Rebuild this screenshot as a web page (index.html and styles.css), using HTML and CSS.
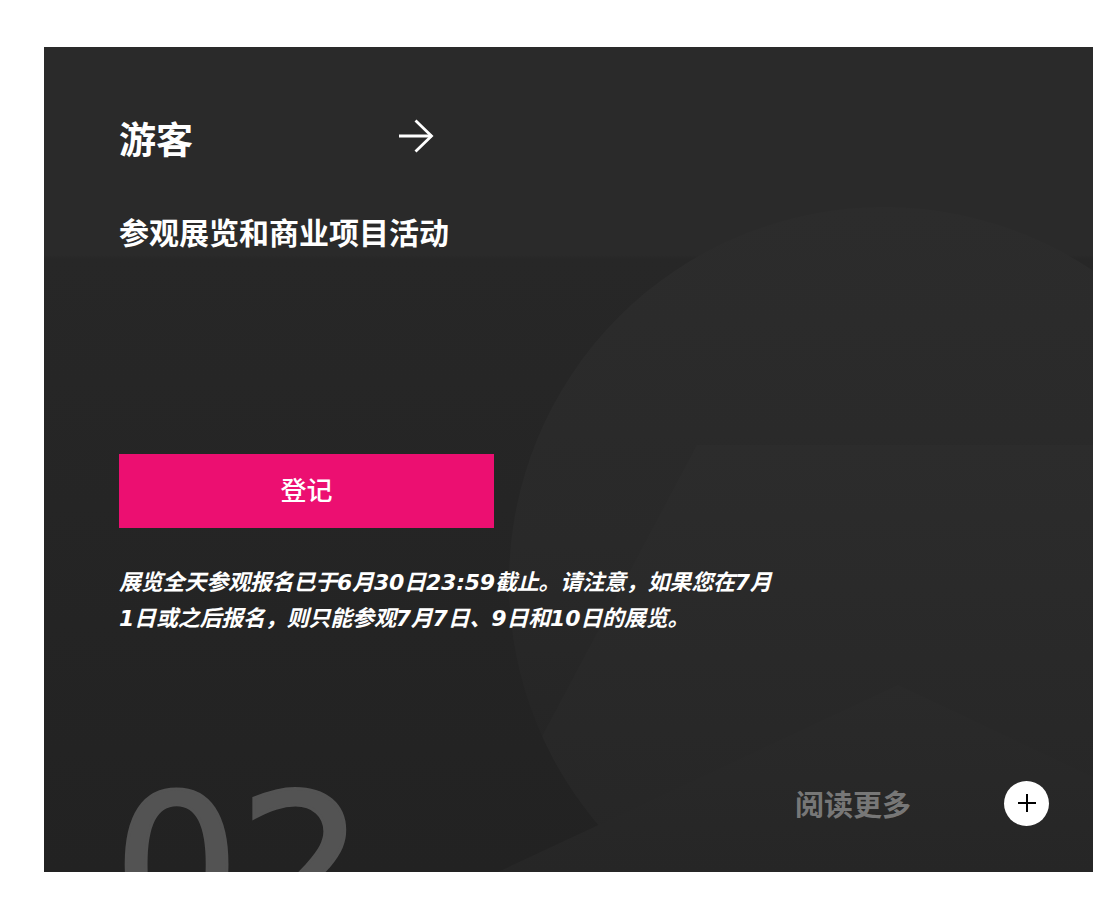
FILE: index.html
```html
<!DOCTYPE html>
<html lang="zh-CN">
<head>
<meta charset="utf-8">
<title>游客</title>
<link rel="stylesheet" href="styles.css">
</head>
<body>
<div class="card">
  <svg class="card-bg" viewBox="0 0 1049 825" preserveAspectRatio="none" aria-hidden="true">
    <defs>
      <linearGradient id="gCircle" x1="0" y1="0" x2="0" y2="1">
        <stop offset="0" stop-color="#2c2c2c"/>
        <stop offset="0.45" stop-color="#292929"/>
        <stop offset="0.8" stop-color="#242424"/>
        <stop offset="1" stop-color="#222222"/>
      </linearGradient>
      <linearGradient id="gPara" x1="0" y1="0" x2="0" y2="1">
        <stop offset="0" stop-color="#2c2c2c"/>
        <stop offset="1" stop-color="#262626"/>
      </linearGradient>
      <linearGradient id="gMount" x1="0" y1="0" x2="0" y2="1">
        <stop offset="0" stop-color="#2a2a2a"/>
        <stop offset="1" stop-color="#262626"/>
      </linearGradient>
      <clipPath id="cCircle"><circle cx="840" cy="535" r="375"/></clipPath>
    </defs>
    <circle cx="840" cy="535" r="375" fill="url(#gCircle)"/>
    <polygon points="653,398 1049,398 1049,825 426,825" fill="url(#gPara)" clip-path="url(#cCircle)"/>
    <polygon points="854,638 1049,730 1049,825 454,825" fill="url(#gMount)"/>
  </svg>

  <div class="content">
    <div class="head">
      <h2 class="title">游客</h2>
      <svg class="arrow" width="36" height="34" viewBox="0 0 36 34" aria-hidden="true">
        <path d="M1 17 H33.5" fill="none" stroke="#fff" stroke-width="2.8"/>
        <path d="M17.5 1.5 L33.5 17 L17.5 32.5" fill="none" stroke="#fff" stroke-width="2.8"/>
      </svg>
    </div>
    <p class="sub">参观展览和商业项目活动</p>
    <a class="btn" href="#">登记</a>
    <p class="note">展览全天参观报名已于6月30日23:59截止。请注意，如果您在7月<br>1日或之后报名，则只能参观7月7日、9日和10日的展览。</p>

    <div class="foot">
      <span class="num">02</span>
      <div class="more">
        <span class="more-text">阅读更多</span>
        <span class="plus" aria-hidden="true"></span>
      </div>
    </div>
  </div>
</div>
</body>
</html>
```

FILE: styles.css
```css
html, body {
  margin: 0;
  padding: 0;
  background: #ffffff;
}

body {
  font-family: "Noto Sans CJK SC", "Noto Sans", sans-serif;
  overflow: hidden;
}

.card {
  position: relative;
  margin: 47px 0 0 44px;
  height: 825px;
  overflow: hidden;
  background: linear-gradient(to bottom, #2a2a2a 0, #2a2a2a 208px, #272727 212px, #222222 100%);
}

.card-bg {
  position: absolute;
  left: 0;
  top: 0;
  width: 1049px;
  height: 825px;
}

.content {
  position: relative;
  display: flex;
  flex-direction: column;
  height: 100%;
  box-sizing: border-box;
  padding: 73px 44px 0 75px;
}

.head {
  display: flex;
  align-items: center;
  justify-content: space-between;
  width: 315px;
}

.title {
  margin: 0;
  font-size: 37px;
  line-height: 36px;
  font-weight: 700;
  color: #ffffff;
}

.arrow {
  display: block;
  margin-top: -4px;
}

.sub {
  margin: 60px 0 0;
  font-size: 30px;
  line-height: 30px;
  font-weight: 700;
  color: #ffffff;
}

.btn {
  display: flex;
  align-items: center;
  justify-content: center;
  box-sizing: border-box;
  margin-top: 208px;
  width: 375px;
  height: 74px;
  padding-bottom: 5px;
  background: #ec0f71;
  color: #ffffff;
  font-size: 26px;
  font-weight: 500;
  text-decoration: none;
}

.note {
  margin: 37px 0 0;
  font-family: "DejaVu Sans", "Noto Sans CJK SC", sans-serif;
  font-size: 22px;
  line-height: 36px;
  font-style: italic;
  font-weight: 700;
  letter-spacing: -0.2px;
  color: #ffffff;
  white-space: nowrap;
}

.foot {
  display: flex;
  justify-content: space-between;
  align-items: flex-start;
  margin-top: auto;
  height: 100px;
}

.num {
  font-family: "DejaVu Sans", sans-serif;
  font-size: 200px;
  line-height: 200px;
  font-weight: 400;
  color: #535353;
  margin: -4px 0 0 -6px;
  letter-spacing: -2px;
  -webkit-text-stroke: 3px #535353;
}

.more {
  display: flex;
  align-items: center;
  gap: 93px;
  height: 62px;
}

.more-text {
  font-size: 29px;
  line-height: 29px;
  font-weight: 700;
  color: #777777;
}

.plus {
  position: relative;
  width: 45px;
  height: 45px;
  border-radius: 50%;
  background: #ffffff;
}

.plus::before,
.plus::after {
  content: "";
  position: absolute;
  left: 50%;
  top: 50%;
  background: #000000;
}

.plus::before {
  width: 18px;
  height: 2px;
  margin: -1px 0 0 -9px;
}

.plus::after {
  width: 2px;
  height: 18px;
  margin: -9px 0 0 -1px;
}
```
